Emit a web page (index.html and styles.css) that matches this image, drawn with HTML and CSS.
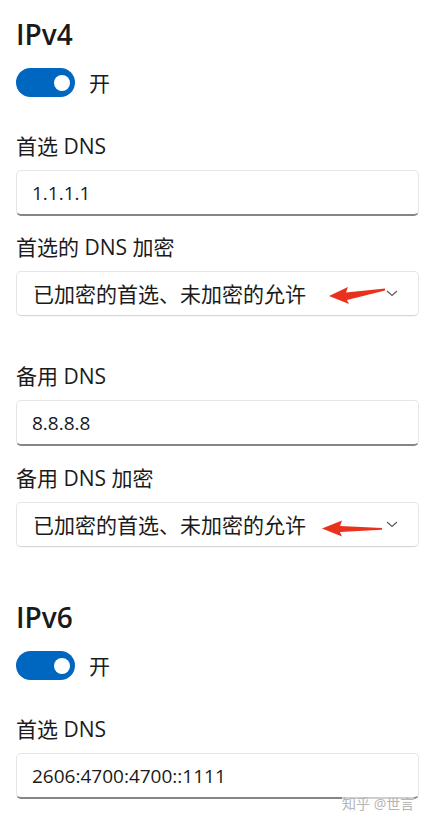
FILE: index.html
```html
<!DOCTYPE html>
<html lang="zh-CN">
<head>
<meta charset="utf-8">
<title>DNS 设置</title>
<link rel="stylesheet" href="styles.css">
</head>
<body>
<div class="page">
  <section class="section">
    <h2 class="heading">IPv4</h2>
    <div class="toggle-row">
      <span class="toggle"><span class="knob"></span></span>
      <span class="toggle-text">开</span>
    </div>
    <div class="field field-first">
      <div class="label">首选 DNS</div>
      <div class="input">1.1.1.1</div>
    </div>
    <div class="field field-near">
      <div class="label">首选的 DNS 加密</div>
      <div class="select">
        <span class="select-text">已加密的首选、未加密的允许</span>
        <svg class="chevron" width="12" height="7" viewBox="0 0 12 7"><path d="M1 1 L6 5.5 L11 1" fill="none" stroke="#5c5c5c" stroke-width="1.2"/></svg>
        <svg class="mark" viewBox="0 0 403 45"><polygon points="313,25 332,16 330,21.5 369,17.5 369,19.5 331,29 333,33" fill="#e8321e"/></svg>
      </div>
    </div>
    <div class="field field-far">
      <div class="label">备用 DNS</div>
      <div class="input">8.8.8.8</div>
    </div>
    <div class="field field-near2">
      <div class="label">备用 DNS 加密</div>
      <div class="select">
        <span class="select-text">已加密的首选、未加密的允许</span>
        <svg class="chevron" width="12" height="7" viewBox="0 0 12 7"><path d="M1 1 L6 5.5 L11 1" fill="none" stroke="#5c5c5c" stroke-width="1.2"/></svg>
        <svg class="mark" viewBox="0 0 403 45"><polygon points="306,26.5 326,18.5 324,24 366,26 366,27.8 324,30 326,34.5" fill="#e8321e"/></svg>
      </div>
    </div>
  </section>
  <section class="section section-v6">
    <h2 class="heading">IPv6</h2>
    <div class="toggle-row">
      <span class="toggle"><span class="knob"></span></span>
      <span class="toggle-text">开</span>
    </div>
    <div class="field field-first">
      <div class="label">首选 DNS</div>
      <div class="input">2606:4700:4700::1111</div>
    </div>
  </section>
  <div class="watermark">知乎 @世言</div>
</div>
</body>
</html>
```
FILE: styles.css
```css
html, body {
  margin: 0;
  padding: 0;
  background: #ffffff;
}
body {
  font-family: "Open Sans", "Noto Sans CJK SC", sans-serif;
  color: #1b1b1b;
}
.page {
  position: relative;
  width: 432px;
  height: 823px;
  overflow: hidden;
  box-sizing: border-box;
  padding: 16px 13px 0 16px;
}
.section {
  display: flex;
  flex-direction: column;
}
.section-v6 {
  margin-top: 52px;
}
.heading {
  margin: 0;
  font-size: 28px;
  line-height: 36px;
  font-weight: 600;
  color: #1a1a1a;
}
.toggle-row {
  margin-top: 16px;
  display: flex;
  align-items: center;
  gap: 14px;
  height: 29px;
}
.toggle {
  width: 59px;
  height: 29px;
  border-radius: 15px;
  background: #0067c0;
  display: flex;
  align-items: center;
  justify-content: flex-end;
  padding-right: 5px;
  box-sizing: border-box;
}
.knob {
  width: 16px;
  height: 16px;
  border-radius: 50%;
  background: #ffffff;
}
.toggle-text {
  font-size: 21px;
  line-height: 28px;
}
.field {
  display: flex;
  flex-direction: column;
}
.field-first { margin-top: 35px; }
.field-near { margin-top: 17px; }
.field-far { margin-top: 46px; }
.field-near2 { margin-top: 18px; }
.label {
  font-size: 21px;
  line-height: 28px;
  margin-bottom: 10px;
}
.input {
  height: 46px;
  box-sizing: border-box;
  border: 1px solid #e6e6e6;
  border-bottom: 2px solid #868686;
  border-radius: 5px;
  background: #ffffff;
  padding-left: 15px;
  display: flex;
  align-items: center;
  font-size: 19px;
  color: #1a1a1a;
}
.select {
  position: relative;
  height: 45px;
  box-sizing: border-box;
  border: 1px solid #e6e6e6;
  border-bottom-color: #d6d6d6;
  border-radius: 5px;
  background: #ffffff;
  box-shadow: 0 1px 1px rgba(0,0,0,0.03);
  padding: 0 20px 0 16px;
  display: flex;
  align-items: center;
  justify-content: space-between;
  font-size: 21px;
}
.select-text {
  line-height: 28px;
}
.chevron {
  display: block;
}
.mark {
  position: absolute;
  left: -1px;
  top: -1px;
  width: 403px;
  height: 45px;
  overflow: visible;
}
.watermark {
  position: absolute;
  left: 342px;
  top: 794px;
  font-size: 14px;
  line-height: 20px;
  color: #b5b5b5;
  background: rgba(255,255,255,0.6);
  letter-spacing: 0;
}
```
